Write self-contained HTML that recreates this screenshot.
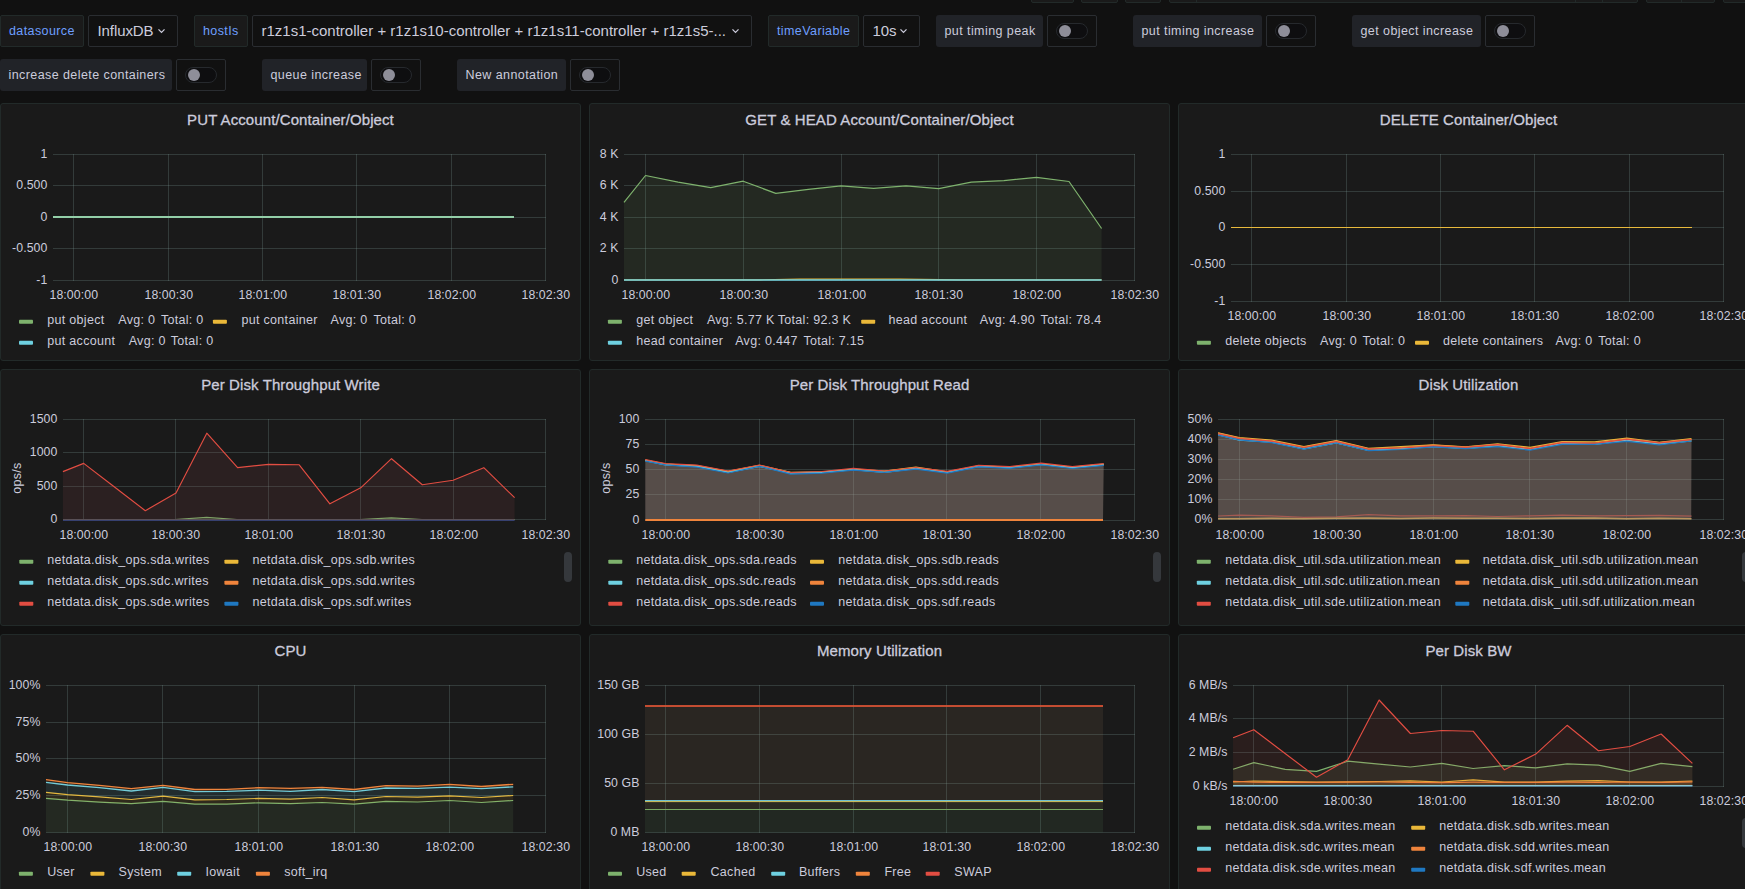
<!DOCTYPE html>
<html><head><meta charset="utf-8"><title>Dashboard</title><style>
html,body{margin:0;padding:0}
body{background:#111111;width:1745px;height:889px;overflow:hidden;position:relative;font-family:"Liberation Sans",sans-serif;color:#ccccdc}
.b{position:absolute;box-sizing:border-box}
.t{position:absolute;white-space:nowrap;line-height:1}
svg{position:absolute;left:0;top:0}
</style></head><body>
<div class="b" style="left:1031px;top:-30px;width:43px;height:33px;background:#1a1a1a;border:1px solid #222a29;border-radius:2px;"></div>
<div class="b" style="left:1081px;top:-30px;width:37px;height:33px;background:#1a1a1a;border:1px solid #222a29;border-radius:2px;"></div>
<div class="b" style="left:1125px;top:-30px;width:36px;height:33px;background:#1a1a1a;border:1px solid #222a29;border-radius:2px;"></div>
<div class="b" style="left:1169px;top:-30px;width:469px;height:33px;background:#1a1a1a;border:1px solid #222a29;border-radius:2px;"></div>
<div class="b" style="left:1646px;top:-30px;width:69px;height:33px;background:#1a1a1a;border:1px solid #222a29;border-radius:2px;"></div>
<div class="b" style="left:1723px;top:-30px;width:68px;height:33px;background:#1a1a1a;border:1px solid #222a29;border-radius:2px;"></div>
<div class="b" style="left:1196px;top:-30px;width:1px;height:33px;background:#222a29;"></div>
<div class="b" style="left:1575px;top:-30px;width:1px;height:33px;background:#222a29;"></div>
<div class="b" style="left:1602px;top:-30px;width:1px;height:33px;background:#222a29;"></div>
<div class="b" style="left:1681px;top:-30px;width:1px;height:33px;background:#222a29;"></div>
<div class="b" style="left:0px;top:15px;width:84px;height:32px;background:#1a1a1a;border:1px solid #222a29;border-radius:2px;"></div>
<div class="b" style="left:88px;top:15px;width:90px;height:32px;background:#111111;border:1px solid #2a2d31;border-radius:2px;"></div>
<div class="b" style="left:194px;top:15px;width:54px;height:32px;background:#1a1a1a;border:1px solid #222a29;border-radius:2px;"></div>
<div class="b" style="left:252px;top:15px;width:500px;height:32px;background:#111111;border:1px solid #2a2d31;border-radius:2px;"></div>
<div class="b" style="left:768px;top:15px;width:91px;height:32px;background:#1a1a1a;border:1px solid #222a29;border-radius:2px;"></div>
<div class="b" style="left:863px;top:15px;width:57px;height:32px;background:#111111;border:1px solid #2a2d31;border-radius:2px;"></div>
<div class="b" style="left:936px;top:15px;width:107px;height:32px;background:#212328;border-radius:3px;"></div>
<div class="b" style="left:1047px;top:15px;width:50px;height:32px;background:#111111;border:1px solid #2a2d31;border-radius:2px;"></div>
<div class="b" style="left:1056px;top:23px;width:32px;height:16px;background:#0e0e10;border:1px solid #26292d;border-radius:8px;"></div>
<div class="b" style="left:1059px;top:25px;width:12px;height:12px;border-radius:6px;background:#8e8e99"></div>
<div class="b" style="left:1133px;top:15px;width:129px;height:32px;background:#212328;border-radius:3px;"></div>
<div class="b" style="left:1266px;top:15px;width:50px;height:32px;background:#111111;border:1px solid #2a2d31;border-radius:2px;"></div>
<div class="b" style="left:1275px;top:23px;width:32px;height:16px;background:#0e0e10;border:1px solid #26292d;border-radius:8px;"></div>
<div class="b" style="left:1278px;top:25px;width:12px;height:12px;border-radius:6px;background:#8e8e99"></div>
<div class="b" style="left:1352px;top:15px;width:129px;height:32px;background:#212328;border-radius:3px;"></div>
<div class="b" style="left:1485px;top:15px;width:50px;height:32px;background:#111111;border:1px solid #2a2d31;border-radius:2px;"></div>
<div class="b" style="left:1494px;top:23px;width:32px;height:16px;background:#0e0e10;border:1px solid #26292d;border-radius:8px;"></div>
<div class="b" style="left:1497px;top:25px;width:12px;height:12px;border-radius:6px;background:#8e8e99"></div>
<div class="b" style="left:0px;top:59px;width:172px;height:32px;background:#212328;border-radius:3px;"></div>
<div class="b" style="left:176px;top:59px;width:50px;height:32px;background:#111111;border:1px solid #2a2d31;border-radius:2px;"></div>
<div class="b" style="left:185px;top:67px;width:32px;height:16px;background:#0e0e10;border:1px solid #26292d;border-radius:8px;"></div>
<div class="b" style="left:188px;top:69px;width:12px;height:12px;border-radius:6px;background:#8e8e99"></div>
<div class="b" style="left:262px;top:59px;width:105px;height:32px;background:#212328;border-radius:3px;"></div>
<div class="b" style="left:371px;top:59px;width:50px;height:32px;background:#111111;border:1px solid #2a2d31;border-radius:2px;"></div>
<div class="b" style="left:380px;top:67px;width:32px;height:16px;background:#0e0e10;border:1px solid #26292d;border-radius:8px;"></div>
<div class="b" style="left:383px;top:69px;width:12px;height:12px;border-radius:6px;background:#8e8e99"></div>
<div class="b" style="left:457px;top:59px;width:109px;height:32px;background:#212328;border-radius:3px;"></div>
<div class="b" style="left:570px;top:59px;width:50px;height:32px;background:#111111;border:1px solid #2a2d31;border-radius:2px;"></div>
<div class="b" style="left:579px;top:67px;width:32px;height:16px;background:#0e0e10;border:1px solid #26292d;border-radius:8px;"></div>
<div class="b" style="left:582px;top:69px;width:12px;height:12px;border-radius:6px;background:#8e8e99"></div>
<div class="b" style="left:0px;top:103px;width:581px;height:258px;background:#1a1a1a;border:1px solid #222a29;border-radius:3px;"></div>
<div class="b" style="left:589px;top:103px;width:581px;height:258px;background:#1a1a1a;border:1px solid #222a29;border-radius:3px;"></div>
<div class="b" style="left:1178px;top:103px;width:581px;height:258px;background:#1a1a1a;border:1px solid #222a29;border-radius:3px;"></div>
<div class="b" style="left:0px;top:369px;width:581px;height:257px;background:#1a1a1a;border:1px solid #222a29;border-radius:3px;"></div>
<div class="b" style="left:589px;top:369px;width:581px;height:257px;background:#1a1a1a;border:1px solid #222a29;border-radius:3px;"></div>
<div class="b" style="left:1178px;top:369px;width:581px;height:257px;background:#1a1a1a;border:1px solid #222a29;border-radius:3px;"></div>
<div class="b" style="left:0px;top:634px;width:581px;height:258px;background:#1a1a1a;border:1px solid #222a29;border-radius:3px;"></div>
<div class="b" style="left:589px;top:634px;width:581px;height:258px;background:#1a1a1a;border:1px solid #222a29;border-radius:3px;"></div>
<div class="b" style="left:1178px;top:634px;width:581px;height:258px;background:#1a1a1a;border:1px solid #222a29;border-radius:3px;"></div>
<div class="b" style="left:564px;top:552px;width:8px;height:30px;background:#35383c;border-radius:4px;"></div>
<div class="b" style="left:1153px;top:552px;width:8px;height:30px;background:#35383c;border-radius:4px;"></div>
<div class="b" style="left:1742px;top:552px;width:8px;height:30px;background:#35383c;border-radius:4px;"></div>
<div class="b" style="left:1742px;top:818px;width:8px;height:30px;background:#35383c;border-radius:4px;"></div>
<svg width="1745" height="889" viewBox="0 0 1745 889">
<path d="M158.5 29.4 L161.5 32.4 L164.5 29.4" stroke="#ccccdc" stroke-width="1.25" fill="none"/>
<path d="M732.5 29.4 L735.5 32.4 L738.5 29.4" stroke="#ccccdc" stroke-width="1.25" fill="none"/>
<path d="M900.5 29.4 L903.5 32.4 L906.5 29.4" stroke="#ccccdc" stroke-width="1.25" fill="none"/>
<path d="M53 154.5H546 M53 185.5H546 M53 217.5H546 M53 248.5H546 M53 280.5H546 M73.5 154.0V281.0 M168.5 154.0V281.0 M262.5 154.0V281.0 M356.5 154.0V281.0 M451.5 154.0V281.0 M545.5 154.0V281.0" stroke="rgba(135,170,165,0.23)" stroke-width="1" fill="none"/>
<polyline points="53.0,217.0 514.0,217.0" stroke="#93cfa8" stroke-width="2.0" fill="none" stroke-linejoin="round"/>
<rect x="19.0" y="319.7" width="14" height="4" rx="0.9" fill="#7EB26D"/>
<rect x="212.9" y="319.7" width="14" height="4" rx="0.9" fill="#EAB839"/>
<rect x="19.0" y="340.7" width="14" height="4" rx="0.9" fill="#6ED0E0"/>
<path d="M624 154.5H1135 M624 185.5H1135 M624 217.5H1135 M624 248.5H1135 M624 280.5H1135 M645.5 154.0V281.0 M743.5 154.0V281.0 M841.5 154.0V281.0 M938.5 154.0V281.0 M1036.5 154.0V281.0 M1134.5 154.0V281.0" stroke="rgba(135,170,165,0.23)" stroke-width="1" fill="none"/>
<polygon points="624.0,280.5 624.0,202.4 645.5,175.5 678.1,182.2 710.7,187.7 743.2,181.2 775.8,193.4 808.4,189.4 841.0,185.8 873.6,188.4 906.1,185.8 938.7,188.6 971.3,182.2 1003.9,180.6 1036.5,177.3 1069.0,181.5 1101.6,228.5 1101.6,280.5" fill="#7EB26D" fill-opacity="0.1"/>
<polyline points="624.0,202.4 645.5,175.5 678.1,182.2 710.7,187.7 743.2,181.2 775.8,193.4 808.4,189.4 841.0,185.8 873.6,188.4 906.1,185.8 938.7,188.6 971.3,182.2 1003.9,180.6 1036.5,177.3 1069.0,181.5 1101.6,228.5" stroke="#7EB26D" stroke-width="1.2" fill="none" stroke-linejoin="round"/>
<polyline points="624.0,279.8 760.0,279.8 800.0,279.2 900.0,279.2 960.0,279.8 1101.6,279.8" stroke="#EAB839" stroke-width="1.2" fill="none" stroke-linejoin="round"/>
<polyline points="624.0,280.0 1101.6,280.0" stroke="#6ED0E0" stroke-width="1.4" fill="none" stroke-linejoin="round"/>
<rect x="607.9" y="319.7" width="14" height="4" rx="0.9" fill="#7EB26D"/>
<rect x="861.2" y="319.7" width="14" height="4" rx="0.9" fill="#EAB839"/>
<rect x="607.9" y="340.7" width="14" height="4" rx="0.9" fill="#6ED0E0"/>
<path d="M1231 154.5H1724 M1231 191.5H1724 M1231 227.5H1724 M1231 264.5H1724 M1231 301.5H1724 M1251.5 154.0V302.0 M1346.5 154.0V302.0 M1440.5 154.0V302.0 M1534.5 154.0V302.0 M1629.5 154.0V302.0 M1723.5 154.0V302.0" stroke="rgba(135,170,165,0.23)" stroke-width="1" fill="none"/>
<polyline points="1231.0,227.5 1692.0,227.5" stroke="#e8b93c" stroke-width="1.1" fill="none" stroke-linejoin="round"/>
<rect x="1196.9" y="340.7" width="14" height="4" rx="0.9" fill="#7EB26D"/>
<rect x="1415.0" y="340.7" width="14" height="4" rx="0.9" fill="#EAB839"/>
<path d="M63 419.5H546 M63 452.5H546 M63 486.5H546 M63 519.5H546 M83.5 419.0V520.0 M175.5 419.0V520.0 M268.5 419.0V520.0 M360.5 419.0V520.0 M453.5 419.0V520.0 M545.5 419.0V520.0" stroke="rgba(135,170,165,0.23)" stroke-width="1" fill="none"/>
<polygon points="63.0,519.5 63.0,519.5 175.0,519.5 206.6,517.3 237.0,519.5 360.0,519.5 391.4,517.8 422.0,519.5 514.6,519.5 514.6,519.5" fill="#7EB26D" fill-opacity="0.1"/>
<polyline points="63.0,519.5 175.0,519.5 206.6,517.3 237.0,519.5 360.0,519.5 391.4,517.8 422.0,519.5 514.6,519.5" stroke="#7EB26D" stroke-width="1.2" fill="none" stroke-linejoin="round"/>
<polygon points="62.9,519.5 62.9,471.6 83.7,463.4 114.5,487.0 145.3,510.7 176.0,493.1 206.8,433.2 237.6,467.6 268.4,464.4 299.2,464.8 329.9,503.8 360.7,487.8 391.5,458.7 422.3,484.8 453.1,480.2 483.8,467.7 514.6,497.7 514.6,519.5" fill="rgb(139,66,73)" fill-opacity="0.15"/>
<polyline points="62.9,471.6 83.7,463.4 114.5,487.0 145.3,510.7 176.0,493.1 206.8,433.2 237.6,467.6 268.4,464.4 299.2,464.8 329.9,503.8 360.7,487.8 391.5,458.7 422.3,484.8 453.1,480.2 483.8,467.7 514.6,497.7" stroke="#E24D42" stroke-width="1.15" fill="none" stroke-linejoin="round"/>
<polyline points="63.0,519.5 514.6,519.5" stroke="#5c5252" stroke-width="1.0" fill="none" stroke-linejoin="round"/>
<polyline points="63.0,520.4 514.6,520.4" stroke="#3d4a86" stroke-width="0.9" fill="none" stroke-linejoin="round"/>
<rect x="19.3" y="559.7" width="14" height="4" rx="0.9" fill="#7EB26D"/>
<rect x="224.4" y="559.7" width="14" height="4" rx="0.9" fill="#EAB839"/>
<rect x="19.3" y="580.7" width="14" height="4" rx="0.9" fill="#6ED0E0"/>
<rect x="224.4" y="580.7" width="14" height="4" rx="0.9" fill="#EF843C"/>
<rect x="19.3" y="601.7" width="14" height="4" rx="0.9" fill="#E24D42"/>
<rect x="224.4" y="601.7" width="14" height="4" rx="0.9" fill="#1F78C1"/>
<path d="M645 419.5H1135 M645 444.5H1135 M645 469.5H1135 M645 494.5H1135 M645 520.5H1135 M665.5 419.0V521.0 M759.5 419.0V521.0 M853.5 419.0V521.0 M946.5 419.0V521.0 M1040.5 419.0V521.0 M1134.5 419.0V521.0" stroke="rgba(135,170,165,0.23)" stroke-width="1" fill="none"/>
<polygon points="645.3,520.5 645.3,461.0 665.5,464.8 696.8,466.5 728.1,472.2 759.4,466.2 790.7,473.6 822.0,472.9 853.3,470.1 884.6,472.2 915.9,468.6 947.2,472.5 978.5,466.8 1009.8,467.9 1041.1,464.8 1072.4,467.9 1103.7,465.0 1103,520.5" fill="rgb(178,154,146)" fill-opacity="0.4"/>
<polyline points="645.3,460.2 665.5,464.2 696.8,465.8 728.1,471.7 759.4,465.7 790.7,472.7 822.0,471.9 853.3,469.8 884.6,471.4 915.9,467.8 947.2,472.3 978.5,466.2 1009.8,467.6 1041.1,464.2 1072.4,467.4 1103.7,464.1" stroke="#7EB26D" stroke-width="1.2" fill="none" stroke-linejoin="round"/>
<polyline points="645.3,460.1 665.5,464.1 696.8,465.5 728.1,471.4 759.4,465.3 790.7,472.3 822.0,472.1 853.3,469.2 884.6,471.0 915.9,467.2 947.2,471.8 978.5,465.8 1009.8,467.1 1041.1,464.1 1072.4,467.1 1103.7,464.3" stroke="#EAB839" stroke-width="1.2" fill="none" stroke-linejoin="round"/>
<polyline points="645.3,460.7 665.5,464.8 696.8,466.3 728.1,472.3 759.4,466.3 790.7,473.1 822.0,472.4 853.3,469.7 884.6,472.4 915.9,468.3 947.2,472.4 978.5,466.4 1009.8,467.7 1041.1,464.5 1072.4,467.6 1103.7,464.9" stroke="#6ED0E0" stroke-width="1.2" fill="none" stroke-linejoin="round"/>
<polyline points="645.3,459.6 665.5,463.6 696.8,465.1 728.1,471.0 759.4,465.0 790.7,472.5 822.0,471.5 853.3,468.3 884.6,471.0 915.9,467.5 947.2,471.3 978.5,465.4 1009.8,466.6 1041.1,463.1 1072.4,466.7 1103.7,463.6" stroke="#E24D42" stroke-width="1.2" fill="none" stroke-linejoin="round"/>
<polyline points="645.3,461.2 665.5,464.9 696.8,467.2 728.1,473.0 759.4,466.3 790.7,474.2 822.0,473.2 853.3,470.2 884.6,472.4 915.9,469.2 947.2,473.2 978.5,466.8 1009.8,468.4 1041.1,464.8 1072.4,468.5 1103.7,465.3" stroke="#1F78C1" stroke-width="1.2" fill="none" stroke-linejoin="round"/>
<polyline points="645.3,520.0 1103.0,520.0" stroke="#EF843C" stroke-width="1.8" fill="none" stroke-linejoin="round"/>
<rect x="608.3" y="559.7" width="14" height="4" rx="0.9" fill="#7EB26D"/>
<rect x="810.0" y="559.7" width="14" height="4" rx="0.9" fill="#EAB839"/>
<rect x="608.3" y="580.7" width="14" height="4" rx="0.9" fill="#6ED0E0"/>
<rect x="810.0" y="580.7" width="14" height="4" rx="0.9" fill="#EF843C"/>
<rect x="608.3" y="601.7" width="14" height="4" rx="0.9" fill="#E24D42"/>
<rect x="810.0" y="601.7" width="14" height="4" rx="0.9" fill="#1F78C1"/>
<path d="M1218 419.5H1724 M1218 439.5H1724 M1218 459.5H1724 M1218 479.5H1724 M1218 499.5H1724 M1218 519.5H1724 M1239.5 419.0V520.0 M1336.5 419.0V520.0 M1433.5 419.0V520.0 M1529.5 419.0V520.0 M1626.5 419.0V520.0 M1723.5 419.0V520.0" stroke="rgba(135,170,165,0.23)" stroke-width="1" fill="none"/>
<polygon points="1218.1,519.5 1218.1,434.4 1239.3,439.5 1271.6,442.1 1303.9,448.6 1336.2,442.5 1368.5,450.2 1400.8,448.6 1433.1,446.6 1465.4,448.4 1497.7,445.7 1530.0,449.3 1562.3,443.4 1594.6,443.9 1626.9,440.3 1659.2,443.9 1691.5,440.6 1691.2,519.5" fill="rgb(178,154,146)" fill-opacity="0.4"/>
<polyline points="1218.1,516.0 1239.3,515.2 1271.6,515.8 1303.9,517.4 1336.2,516.8 1368.5,514.6 1400.8,515.8 1433.1,515.8 1465.4,515.6 1497.7,516.5 1530.0,515.8 1562.3,515.2 1594.6,515.8 1626.9,515.6 1659.2,515.4 1691.5,516.2" stroke="#a45a52" stroke-width="1.2" fill="none" stroke-linejoin="round"/>
<polyline points="1218.1,518.7 1239.3,518.8 1271.6,518.4 1303.9,518.8 1336.2,518.2 1368.5,518.1 1400.8,518.5 1433.1,518.0 1465.4,518.2 1497.7,518.3 1530.0,518.5 1562.3,518.1 1594.6,518.0 1626.9,518.7 1659.2,518.3 1691.5,518.8" stroke="#b8955e" stroke-width="1.6" fill="none" stroke-linejoin="round"/>
<polyline points="1218.1,432.8 1239.3,437.5 1271.6,440.2 1303.9,446.7 1336.2,440.7 1368.5,448.4 1400.8,446.7 1433.1,444.8 1465.4,446.9 1497.7,443.8 1530.0,447.3 1562.3,441.7 1594.6,441.8 1626.9,438.2 1659.2,442.4 1691.5,438.7" stroke="#EAB839" stroke-width="1.2" fill="none" stroke-linejoin="round"/>
<polyline points="1218.1,434.2 1239.3,438.9 1271.6,441.8 1303.9,448.5 1336.2,441.9 1368.5,450.1 1400.8,448.5 1433.1,446.0 1465.4,448.3 1497.7,445.5 1530.0,449.2 1562.3,443.1 1594.6,443.9 1626.9,440.3 1659.2,443.3 1691.5,440.0" stroke="#7EB26D" stroke-width="1.2" fill="none" stroke-linejoin="round"/>
<polyline points="1218.1,434.7 1239.3,440.1 1271.6,442.1 1303.9,448.8 1336.2,442.8 1368.5,450.3 1400.8,448.7 1433.1,446.7 1465.4,448.5 1497.7,446.0 1530.0,449.3 1562.3,443.5 1594.6,444.3 1626.9,440.1 1659.2,444.2 1691.5,441.0" stroke="#6ED0E0" stroke-width="1.2" fill="none" stroke-linejoin="round"/>
<polyline points="1218.1,433.0 1239.3,438.1 1271.6,441.1 1303.9,447.2 1336.2,441.0 1368.5,448.9 1400.8,447.6 1433.1,445.1 1465.4,447.1 1497.7,444.4 1530.0,448.4 1562.3,442.2 1594.6,443.0 1626.9,438.8 1659.2,442.6 1691.5,439.5" stroke="#EF843C" stroke-width="1.2" fill="none" stroke-linejoin="round"/>
<polyline points="1218.1,433.9 1239.3,438.7 1271.6,441.1 1303.9,447.5 1336.2,441.7 1368.5,449.2 1400.8,448.0 1433.1,446.1 1465.4,447.3 1497.7,444.7 1530.0,448.7 1562.3,442.7 1594.6,443.3 1626.9,439.4 1659.2,442.8 1691.5,439.6" stroke="#E24D42" stroke-width="1.2" fill="none" stroke-linejoin="round"/>
<polyline points="1218.1,435.2 1239.3,439.9 1271.6,442.6 1303.9,449.1 1336.2,443.0 1368.5,450.7 1400.8,449.5 1433.1,446.9 1465.4,448.6 1497.7,446.7 1530.0,450.2 1562.3,444.4 1594.6,444.4 1626.9,441.3 1659.2,444.8 1691.5,441.0" stroke="#1F78C1" stroke-width="1.2" fill="none" stroke-linejoin="round"/>
<rect x="1196.8" y="559.7" width="14" height="4" rx="0.9" fill="#7EB26D"/>
<rect x="1455.3" y="559.7" width="14" height="4" rx="0.9" fill="#EAB839"/>
<rect x="1196.8" y="580.7" width="14" height="4" rx="0.9" fill="#6ED0E0"/>
<rect x="1455.3" y="580.7" width="14" height="4" rx="0.9" fill="#EF843C"/>
<rect x="1196.8" y="601.7" width="14" height="4" rx="0.9" fill="#E24D42"/>
<rect x="1455.3" y="601.7" width="14" height="4" rx="0.9" fill="#1F78C1"/>
<path d="M46 685.5H546 M46 722.5H546 M46 758.5H546 M46 795.5H546 M46 832.5H546 M67.5 685.0V833.0 M162.5 685.0V833.0 M258.5 685.0V833.0 M354.5 685.0V833.0 M449.5 685.0V833.0 M545.5 685.0V833.0" stroke="rgba(135,170,165,0.23)" stroke-width="1" fill="none"/>
<polygon points="46.0,798.3 67.6,800.2 99.4,802.2 131.3,803.7 163.1,801.3 194.9,804.2 226.7,804.2 258.6,802.8 290.4,803.7 322.2,802.5 354.1,804.2 385.9,801.4 417.7,802.0 449.6,800.5 481.4,802.5 513.2,800.5 513.2,832.5 481.4,832.5 449.6,832.5 417.7,832.5 385.9,832.5 354.1,832.5 322.2,832.5 290.4,832.5 258.6,832.5 226.7,832.5 194.9,832.5 163.1,832.5 131.3,832.5 99.4,832.5 67.6,832.5 46.0,832.5" fill="#7EB26D" fill-opacity="0.1"/>
<polyline points="46.0,798.3 67.6,800.2 99.4,802.2 131.3,803.7 163.1,801.3 194.9,804.2 226.7,804.2 258.6,802.8 290.4,803.7 322.2,802.5 354.1,804.2 385.9,801.4 417.7,802.0 449.6,800.5 481.4,802.5 513.2,800.5" stroke="#7EB26D" stroke-width="1.2" fill="none" stroke-linejoin="round"/>
<polygon points="46.0,792.3 67.6,794.6 99.4,796.9 131.3,799.5 163.1,796.2 194.9,799.8 226.7,799.5 258.6,798.4 290.4,799.2 322.2,797.5 354.1,799.8 385.9,796.5 417.7,797.2 449.6,795.8 481.4,797.5 513.2,795.5 513.2,800.5 481.4,802.5 449.6,800.5 417.7,802.0 385.9,801.4 354.1,804.2 322.2,802.5 290.4,803.7 258.6,802.8 226.7,804.2 194.9,804.2 163.1,801.3 131.3,803.7 99.4,802.2 67.6,800.2 46.0,798.3" fill="#EAB839" fill-opacity="0.1"/>
<polyline points="46.0,792.3 67.6,794.6 99.4,796.9 131.3,799.5 163.1,796.2 194.9,799.8 226.7,799.5 258.6,798.4 290.4,799.2 322.2,797.5 354.1,799.8 385.9,796.5 417.7,797.2 449.6,795.8 481.4,797.5 513.2,795.5" stroke="#EAB839" stroke-width="1.2" fill="none" stroke-linejoin="round"/>
<polygon points="46.0,782.3 67.6,785.0 99.4,787.6 131.3,791.0 163.1,787.3 194.9,791.6 226.7,791.3 258.6,790.2 290.4,791.3 322.2,789.5 354.1,791.6 385.9,788.0 417.7,788.3 449.6,787.1 481.4,788.6 513.2,786.8 513.2,795.5 481.4,797.5 449.6,795.8 417.7,797.2 385.9,796.5 354.1,799.8 322.2,797.5 290.4,799.2 258.6,798.4 226.7,799.5 194.9,799.8 163.1,796.2 131.3,799.5 99.4,796.9 67.6,794.6 46.0,792.3" fill="#6ED0E0" fill-opacity="0.1"/>
<polyline points="46.0,782.3 67.6,785.0 99.4,787.6 131.3,791.0 163.1,787.3 194.9,791.6 226.7,791.3 258.6,790.2 290.4,791.3 322.2,789.5 354.1,791.6 385.9,788.0 417.7,788.3 449.6,787.1 481.4,788.6 513.2,786.8" stroke="#6ED0E0" stroke-width="1.3" fill="none" stroke-linejoin="round"/>
<polygon points="46.0,779.7 67.6,782.6 99.4,785.3 131.3,788.6 163.1,785.3 194.9,789.5 226.7,789.4 258.6,787.7 290.4,788.3 322.2,787.3 354.1,789.5 385.9,785.6 417.7,786.1 449.6,784.3 481.4,786.5 513.2,784.3 513.2,786.8 481.4,788.6 449.6,787.1 417.7,788.3 385.9,788.0 354.1,791.6 322.2,789.5 290.4,791.3 258.6,790.2 226.7,791.3 194.9,791.6 163.1,787.3 131.3,791.0 99.4,787.6 67.6,785.0 46.0,782.3" fill="#EF843C" fill-opacity="0.1"/>
<polyline points="46.0,779.7 67.6,782.6 99.4,785.3 131.3,788.6 163.1,785.3 194.9,789.5 226.7,789.4 258.6,787.7 290.4,788.3 322.2,787.3 354.1,789.5 385.9,785.6 417.7,786.1 449.6,784.3 481.4,786.5 513.2,784.3" stroke="#EF843C" stroke-width="1.3" fill="none" stroke-linejoin="round"/>
<rect x="18.9" y="871.7" width="14" height="4" rx="0.9" fill="#7EB26D"/>
<rect x="90.4" y="871.7" width="14" height="4" rx="0.9" fill="#EAB839"/>
<rect x="177.2" y="871.7" width="14" height="4" rx="0.9" fill="#6ED0E0"/>
<rect x="255.9" y="871.7" width="14" height="4" rx="0.9" fill="#EF843C"/>
<path d="M645 685.5H1135 M645 734.5H1135 M645 783.5H1135 M645 832.5H1135 M665.5 685.0V833.0 M759.5 685.0V833.0 M853.5 685.0V833.0 M946.5 685.0V833.0 M1040.5 685.0V833.0 M1134.5 685.0V833.0" stroke="rgba(135,170,165,0.23)" stroke-width="1" fill="none"/>
<rect x="645" y="809.5" width="458" height="23" fill="rgb(106,166,106)" fill-opacity="0.1"/>
<rect x="645" y="801.5" width="458" height="8" fill="rgb(196,186,106)" fill-opacity="0.1"/>
<rect x="645" y="706" width="458" height="95" fill="rgb(186,146,106)" fill-opacity="0.1"/>
<polyline points="645.0,809.5 1103.0,809.5" stroke="#78a862" stroke-width="1.1" fill="none" stroke-linejoin="round"/>
<polyline points="645.0,801.6 1103.0,801.6" stroke="#d8c860" stroke-width="1.0" fill="none" stroke-linejoin="round"/>
<polyline points="645.0,800.5 1103.0,800.5" stroke="#6ec0d0" stroke-width="1.0" fill="none" stroke-linejoin="round"/>
<polyline points="645.0,706.0 1103.0,706.0" stroke="#e0602f" stroke-width="1.5" fill="none" stroke-linejoin="round"/>
<polyline points="645.0,706.0 1103.0,706.0" stroke="#d84a3a" stroke-width="1.0" fill="none" stroke-linejoin="round"/>
<rect x="608.0" y="871.7" width="14" height="4" rx="0.9" fill="#7EB26D"/>
<rect x="681.7" y="871.7" width="14" height="4" rx="0.9" fill="#EAB839"/>
<rect x="771.2" y="871.7" width="14" height="4" rx="0.9" fill="#6ED0E0"/>
<rect x="855.8" y="871.7" width="14" height="4" rx="0.9" fill="#EF843C"/>
<rect x="925.7" y="871.7" width="14" height="4" rx="0.9" fill="#E24D42"/>
<path d="M1233 685.5H1724 M1233 718.5H1724 M1233 752.5H1724 M1233 786.5H1724 M1253.5 685.0V787.0 M1347.5 685.0V787.0 M1441.5 685.0V787.0 M1535.5 685.0V787.0 M1629.5 685.0V787.0 M1723.5 685.0V787.0" stroke="rgba(135,170,165,0.23)" stroke-width="1" fill="none"/>
<polygon points="1233.1,786.5 1233.1,769.3 1253.8,762.6 1285.1,769.3 1316.5,771.4 1347.8,761.2 1379.1,764.1 1410.4,767.0 1441.8,763.3 1473.1,768.5 1504.4,765.7 1535.8,767.9 1567.1,763.8 1598.4,765.1 1629.8,771.3 1661.1,763.3 1692.4,766.6 1692.4,786.5" fill="#7EB26D" fill-opacity="0.1"/>
<polyline points="1233.1,769.3 1253.8,762.6 1285.1,769.3 1316.5,771.4 1347.8,761.2 1379.1,764.1 1410.4,767.0 1441.8,763.3 1473.1,768.5 1504.4,765.7 1535.8,767.9 1567.1,763.8 1598.4,765.1 1629.8,771.3 1661.1,763.3 1692.4,766.6" stroke="#7EB26D" stroke-width="1.2" fill="none" stroke-linejoin="round"/>
<polygon points="1233.1,786.5 1233.1,782.0 1253.8,781.0 1285.1,781.6 1316.5,782.2 1347.8,781.8 1379.1,781.5 1410.4,780.8 1441.8,782.0 1473.1,779.8 1504.4,782.2 1535.8,782.0 1567.1,781.2 1598.4,780.6 1629.8,782.0 1661.1,782.2 1692.4,781.0 1692.4,786.5" fill="#EAB839" fill-opacity="0.1"/>
<polyline points="1233.1,782.0 1253.8,781.0 1285.1,781.6 1316.5,782.2 1347.8,781.8 1379.1,781.5 1410.4,780.8 1441.8,782.0 1473.1,779.8 1504.4,782.2 1535.8,782.0 1567.1,781.2 1598.4,780.6 1629.8,782.0 1661.1,782.2 1692.4,781.0" stroke="#EAB839" stroke-width="1.2" fill="none" stroke-linejoin="round"/>
<polygon points="1233.1,786.5 1233.1,785.9 1253.8,785.9 1285.1,785.9 1316.5,785.9 1347.8,785.9 1379.1,785.9 1410.4,785.9 1441.8,785.9 1473.1,785.9 1504.4,785.9 1535.8,785.9 1567.1,785.9 1598.4,785.9 1629.8,785.9 1661.1,785.9 1692.4,785.9 1692.4,786.5" fill="#1F78C1" fill-opacity="0.1"/>
<polyline points="1233.1,785.9 1253.8,785.9 1285.1,785.9 1316.5,785.9 1347.8,785.9 1379.1,785.9 1410.4,785.9 1441.8,785.9 1473.1,785.9 1504.4,785.9 1535.8,785.9 1567.1,785.9 1598.4,785.9 1629.8,785.9 1661.1,785.9 1692.4,785.9" stroke="#1F78C1" stroke-width="1.2" fill="none" stroke-linejoin="round"/>
<polygon points="1233.1,786.5 1233.1,781.4 1253.8,782.2 1285.1,782.4 1316.5,782.4 1347.8,782.2 1379.1,782.0 1410.4,782.4 1441.8,782.6 1473.1,782.2 1504.4,782.4 1535.8,782.4 1567.1,782.2 1598.4,782.4 1629.8,782.0 1661.1,782.4 1692.4,781.8 1692.4,786.5" fill="#EF843C" fill-opacity="0.1"/>
<polyline points="1233.1,781.4 1253.8,782.2 1285.1,782.4 1316.5,782.4 1347.8,782.2 1379.1,782.0 1410.4,782.4 1441.8,782.6 1473.1,782.2 1504.4,782.4 1535.8,782.4 1567.1,782.2 1598.4,782.4 1629.8,782.0 1661.1,782.4 1692.4,781.8" stroke="#EF843C" stroke-width="1.2" fill="none" stroke-linejoin="round"/>
<polygon points="1233.1,786.5 1233.1,737.8 1253.8,729.7 1285.1,753.5 1316.5,777.2 1347.8,759.7 1379.1,700.0 1410.4,733.5 1441.8,730.5 1473.1,731.2 1504.4,769.8 1535.8,754.1 1567.1,725.3 1598.4,750.8 1629.8,746.5 1661.1,734.0 1692.4,763.4 1692.4,786.5" fill="#E24D42" fill-opacity="0.085"/>
<polyline points="1233.1,737.8 1253.8,729.7 1285.1,753.5 1316.5,777.2 1347.8,759.7 1379.1,700.0 1410.4,733.5 1441.8,730.5 1473.1,731.2 1504.4,769.8 1535.8,754.1 1567.1,725.3 1598.4,750.8 1629.8,746.5 1661.1,734.0 1692.4,763.4" stroke="#E24D42" stroke-width="1.15" fill="none" stroke-linejoin="round"/>
<polyline points="1233.1,785.6 1253.8,785.6 1285.1,785.6 1316.5,785.6 1347.8,785.6 1379.1,785.6 1410.4,785.6 1441.8,785.6 1473.1,785.6 1504.4,785.6 1535.8,785.6 1567.1,785.6 1598.4,785.6 1629.8,785.6 1661.1,785.6 1692.4,785.6" stroke="#8fc9d2" stroke-width="1.4" fill="none" stroke-linejoin="round"/>
<rect x="1197.0" y="825.7" width="14" height="4" rx="0.9" fill="#7EB26D"/>
<rect x="1411.2" y="825.7" width="14" height="4" rx="0.9" fill="#EAB839"/>
<rect x="1197.0" y="846.7" width="14" height="4" rx="0.9" fill="#6ED0E0"/>
<rect x="1411.2" y="846.7" width="14" height="4" rx="0.9" fill="#EF843C"/>
<rect x="1197.0" y="867.7" width="14" height="4" rx="0.9" fill="#E24D42"/>
<rect x="1411.2" y="867.7" width="14" height="4" rx="0.9" fill="#1F78C1"/>
</svg>
<div class="t" style="top:25.12px;font-size:12.5px;letter-spacing:0.4px;color:#6e9fff;left:9.00px;">datasource</div>
<div class="t" style="top:23.30px;font-size:15px;letter-spacing:-0.08px;left:97.50px;">InfluxDB</div>
<div class="t" style="top:25.12px;font-size:12.5px;letter-spacing:0.4px;color:#6e9fff;left:203.00px;">hostIs</div>
<div class="t" style="top:23.30px;font-size:15px;letter-spacing:0.0px;left:261.50px;">r1z1s1-controller + r1z1s10-controller + r1z1s11-controller + r1z1s5-...</div>
<div class="t" style="top:25.12px;font-size:12.5px;letter-spacing:0.4px;color:#6e9fff;left:777.00px;">timeVariable</div>
<div class="t" style="top:23.30px;font-size:15px;letter-spacing:-0.08px;left:872.50px;">10s</div>
<div class="t" style="top:25.12px;font-size:12.5px;letter-spacing:0.42px;left:944.50px;">put timing peak</div>
<div class="t" style="top:25.12px;font-size:12.5px;letter-spacing:0.42px;left:1141.50px;">put timing increase</div>
<div class="t" style="top:25.12px;font-size:12.5px;letter-spacing:0.42px;left:1360.50px;">get object increase</div>
<div class="t" style="top:69.12px;font-size:12.5px;letter-spacing:0.42px;left:8.50px;">increase delete containers</div>
<div class="t" style="top:69.12px;font-size:12.5px;letter-spacing:0.42px;left:270.50px;">queue increase</div>
<div class="t" style="top:69.12px;font-size:12.5px;letter-spacing:0.42px;left:465.50px;">New annotation</div>
<div class="t" style="top:112.30px;font-size:15px;letter-spacing:0.1px;left:-109.50px;width:800px;text-align:center;-webkit-text-stroke:0.3px #ccccdc;">PUT Account/Container/Object</div>
<div class="t" style="top:112.30px;font-size:15px;letter-spacing:0.1px;left:479.50px;width:800px;text-align:center;-webkit-text-stroke:0.3px #ccccdc;">GET &amp; HEAD Account/Container/Object</div>
<div class="t" style="top:112.30px;font-size:15px;letter-spacing:0.1px;left:1068.50px;width:800px;text-align:center;-webkit-text-stroke:0.3px #ccccdc;">DELETE Container/Object</div>
<div class="t" style="top:377.30px;font-size:15px;letter-spacing:0.1px;left:-109.50px;width:800px;text-align:center;-webkit-text-stroke:0.3px #ccccdc;">Per Disk Throughput Write</div>
<div class="t" style="top:377.30px;font-size:15px;letter-spacing:0.1px;left:479.50px;width:800px;text-align:center;-webkit-text-stroke:0.3px #ccccdc;">Per Disk Throughput Read</div>
<div class="t" style="top:377.30px;font-size:15px;letter-spacing:0.1px;left:1068.50px;width:800px;text-align:center;-webkit-text-stroke:0.3px #ccccdc;">Disk Utilization</div>
<div class="t" style="top:643.30px;font-size:15px;letter-spacing:0.1px;left:-109.50px;width:800px;text-align:center;-webkit-text-stroke:0.3px #ccccdc;">CPU</div>
<div class="t" style="top:643.30px;font-size:15px;letter-spacing:0.1px;left:479.50px;width:800px;text-align:center;-webkit-text-stroke:0.3px #ccccdc;">Memory Utilization</div>
<div class="t" style="top:643.30px;font-size:15px;letter-spacing:0.1px;left:1068.50px;width:800px;text-align:center;-webkit-text-stroke:0.3px #ccccdc;">Per Disk BW</div>
<div class="t" style="top:148.49px;font-size:12.3px;letter-spacing:0.1px;left:-552.50px;width:600px;text-align:right;">1</div>
<div class="t" style="top:179.49px;font-size:12.3px;letter-spacing:0.1px;left:-552.50px;width:600px;text-align:right;">0.500</div>
<div class="t" style="top:211.49px;font-size:12.3px;letter-spacing:0.1px;left:-552.50px;width:600px;text-align:right;">0</div>
<div class="t" style="top:242.49px;font-size:12.3px;letter-spacing:0.1px;left:-552.50px;width:600px;text-align:right;">-0.500</div>
<div class="t" style="top:274.49px;font-size:12.3px;letter-spacing:0.1px;left:-552.50px;width:600px;text-align:right;">-1</div>
<div class="t" style="top:288.59px;font-size:12.3px;letter-spacing:0.1px;left:-326.20px;width:800px;text-align:center;">18:00:00</div>
<div class="t" style="top:288.59px;font-size:12.3px;letter-spacing:0.1px;left:-231.20px;width:800px;text-align:center;">18:00:30</div>
<div class="t" style="top:288.59px;font-size:12.3px;letter-spacing:0.1px;left:-137.20px;width:800px;text-align:center;">18:01:00</div>
<div class="t" style="top:288.59px;font-size:12.3px;letter-spacing:0.1px;left:-43.20px;width:800px;text-align:center;">18:01:30</div>
<div class="t" style="top:288.59px;font-size:12.3px;letter-spacing:0.1px;left:51.80px;width:800px;text-align:center;">18:02:00</div>
<div class="t" style="top:288.59px;font-size:12.3px;letter-spacing:0.1px;left:145.80px;width:800px;text-align:center;">18:02:30</div>
<div class="t" style="top:314.42px;font-size:12.5px;letter-spacing:0.3px;left:47.30px;">put object</div>
<div class="t" style="top:314.42px;font-size:12.5px;letter-spacing:0.3px;left:118.30px;">Avg: 0</div>
<div class="t" style="top:314.42px;font-size:12.5px;letter-spacing:0.3px;left:160.90px;">Total: 0</div>
<div class="t" style="top:314.42px;font-size:12.5px;letter-spacing:0.3px;left:241.50px;">put container</div>
<div class="t" style="top:314.42px;font-size:12.5px;letter-spacing:0.3px;left:330.60px;">Avg: 0</div>
<div class="t" style="top:314.42px;font-size:12.5px;letter-spacing:0.3px;left:373.40px;">Total: 0</div>
<div class="t" style="top:335.42px;font-size:12.5px;letter-spacing:0.3px;left:47.30px;">put account</div>
<div class="t" style="top:335.42px;font-size:12.5px;letter-spacing:0.3px;left:128.70px;">Avg: 0</div>
<div class="t" style="top:335.42px;font-size:12.5px;letter-spacing:0.3px;left:170.80px;">Total: 0</div>
<div class="t" style="top:148.49px;font-size:12.3px;letter-spacing:0.1px;left:18.50px;width:600px;text-align:right;">8 K</div>
<div class="t" style="top:179.49px;font-size:12.3px;letter-spacing:0.1px;left:18.50px;width:600px;text-align:right;">6 K</div>
<div class="t" style="top:211.49px;font-size:12.3px;letter-spacing:0.1px;left:18.50px;width:600px;text-align:right;">4 K</div>
<div class="t" style="top:242.49px;font-size:12.3px;letter-spacing:0.1px;left:18.50px;width:600px;text-align:right;">2 K</div>
<div class="t" style="top:274.49px;font-size:12.3px;letter-spacing:0.1px;left:18.50px;width:600px;text-align:right;">0</div>
<div class="t" style="top:288.59px;font-size:12.3px;letter-spacing:0.1px;left:245.80px;width:800px;text-align:center;">18:00:00</div>
<div class="t" style="top:288.59px;font-size:12.3px;letter-spacing:0.1px;left:343.80px;width:800px;text-align:center;">18:00:30</div>
<div class="t" style="top:288.59px;font-size:12.3px;letter-spacing:0.1px;left:441.80px;width:800px;text-align:center;">18:01:00</div>
<div class="t" style="top:288.59px;font-size:12.3px;letter-spacing:0.1px;left:538.80px;width:800px;text-align:center;">18:01:30</div>
<div class="t" style="top:288.59px;font-size:12.3px;letter-spacing:0.1px;left:636.80px;width:800px;text-align:center;">18:02:00</div>
<div class="t" style="top:288.59px;font-size:12.3px;letter-spacing:0.1px;left:734.80px;width:800px;text-align:center;">18:02:30</div>
<div class="t" style="top:314.42px;font-size:12.5px;letter-spacing:0.3px;left:636.20px;">get object</div>
<div class="t" style="top:314.42px;font-size:12.5px;letter-spacing:0.3px;left:706.90px;">Avg: 5.77 K</div>
<div class="t" style="top:314.42px;font-size:12.5px;letter-spacing:0.3px;left:777.80px;">Total: 92.3 K</div>
<div class="t" style="top:314.42px;font-size:12.5px;letter-spacing:0.3px;left:888.60px;">head account</div>
<div class="t" style="top:314.42px;font-size:12.5px;letter-spacing:0.3px;left:979.80px;">Avg: 4.90</div>
<div class="t" style="top:314.42px;font-size:12.5px;letter-spacing:0.3px;left:1040.60px;">Total: 78.4</div>
<div class="t" style="top:335.42px;font-size:12.5px;letter-spacing:0.3px;left:636.20px;">head container</div>
<div class="t" style="top:335.42px;font-size:12.5px;letter-spacing:0.3px;left:735.20px;">Avg: 0.447</div>
<div class="t" style="top:335.42px;font-size:12.5px;letter-spacing:0.3px;left:803.40px;">Total: 7.15</div>
<div class="t" style="top:148.49px;font-size:12.3px;letter-spacing:0.1px;left:625.50px;width:600px;text-align:right;">1</div>
<div class="t" style="top:185.49px;font-size:12.3px;letter-spacing:0.1px;left:625.50px;width:600px;text-align:right;">0.500</div>
<div class="t" style="top:221.49px;font-size:12.3px;letter-spacing:0.1px;left:625.50px;width:600px;text-align:right;">0</div>
<div class="t" style="top:258.49px;font-size:12.3px;letter-spacing:0.1px;left:625.50px;width:600px;text-align:right;">-0.500</div>
<div class="t" style="top:295.49px;font-size:12.3px;letter-spacing:0.1px;left:625.50px;width:600px;text-align:right;">-1</div>
<div class="t" style="top:309.59px;font-size:12.3px;letter-spacing:0.1px;left:851.80px;width:800px;text-align:center;">18:00:00</div>
<div class="t" style="top:309.59px;font-size:12.3px;letter-spacing:0.1px;left:946.80px;width:800px;text-align:center;">18:00:30</div>
<div class="t" style="top:309.59px;font-size:12.3px;letter-spacing:0.1px;left:1040.80px;width:800px;text-align:center;">18:01:00</div>
<div class="t" style="top:309.59px;font-size:12.3px;letter-spacing:0.1px;left:1134.80px;width:800px;text-align:center;">18:01:30</div>
<div class="t" style="top:309.59px;font-size:12.3px;letter-spacing:0.1px;left:1229.80px;width:800px;text-align:center;">18:02:00</div>
<div class="t" style="top:309.59px;font-size:12.3px;letter-spacing:0.1px;left:1323.80px;width:800px;text-align:center;">18:02:30</div>
<div class="t" style="top:335.42px;font-size:12.5px;letter-spacing:0.3px;left:1225.20px;">delete objects</div>
<div class="t" style="top:335.42px;font-size:12.5px;letter-spacing:0.3px;left:1320.00px;">Avg: 0</div>
<div class="t" style="top:335.42px;font-size:12.5px;letter-spacing:0.3px;left:1362.50px;">Total: 0</div>
<div class="t" style="top:335.42px;font-size:12.5px;letter-spacing:0.3px;left:1443.00px;">delete containers</div>
<div class="t" style="top:335.42px;font-size:12.5px;letter-spacing:0.3px;left:1555.60px;">Avg: 0</div>
<div class="t" style="top:335.42px;font-size:12.5px;letter-spacing:0.3px;left:1598.20px;">Total: 0</div>
<div class="t" style="top:413.49px;font-size:12.3px;letter-spacing:0.1px;left:-542.50px;width:600px;text-align:right;">1500</div>
<div class="t" style="top:446.49px;font-size:12.3px;letter-spacing:0.1px;left:-542.50px;width:600px;text-align:right;">1000</div>
<div class="t" style="top:480.49px;font-size:12.3px;letter-spacing:0.1px;left:-542.50px;width:600px;text-align:right;">500</div>
<div class="t" style="top:513.49px;font-size:12.3px;letter-spacing:0.1px;left:-542.50px;width:600px;text-align:right;">0</div>
<div class="t" style="top:528.89px;font-size:12.3px;letter-spacing:0.1px;left:-316.20px;width:800px;text-align:center;">18:00:00</div>
<div class="t" style="top:528.89px;font-size:12.3px;letter-spacing:0.1px;left:-224.20px;width:800px;text-align:center;">18:00:30</div>
<div class="t" style="top:528.89px;font-size:12.3px;letter-spacing:0.1px;left:-131.20px;width:800px;text-align:center;">18:01:00</div>
<div class="t" style="top:528.89px;font-size:12.3px;letter-spacing:0.1px;left:-39.20px;width:800px;text-align:center;">18:01:30</div>
<div class="t" style="top:528.89px;font-size:12.3px;letter-spacing:0.1px;left:53.80px;width:800px;text-align:center;">18:02:00</div>
<div class="t" style="top:528.89px;font-size:12.3px;letter-spacing:0.1px;left:145.80px;width:800px;text-align:center;">18:02:30</div>
<div class="t" style="top:554.42px;font-size:12.5px;letter-spacing:0.3px;left:47.20px;">netdata.disk_ops.sda.writes</div>
<div class="t" style="top:554.42px;font-size:12.5px;letter-spacing:0.3px;left:252.60px;">netdata.disk_ops.sdb.writes</div>
<div class="t" style="top:575.42px;font-size:12.5px;letter-spacing:0.3px;left:47.20px;">netdata.disk_ops.sdc.writes</div>
<div class="t" style="top:575.42px;font-size:12.5px;letter-spacing:0.3px;left:252.60px;">netdata.disk_ops.sdd.writes</div>
<div class="t" style="top:596.42px;font-size:12.5px;letter-spacing:0.3px;left:47.20px;">netdata.disk_ops.sde.writes</div>
<div class="t" style="top:596.42px;font-size:12.5px;letter-spacing:0.3px;left:252.60px;">netdata.disk_ops.sdf.writes</div>
<div class="t" style="top:413.49px;font-size:12.3px;letter-spacing:0.1px;left:39.50px;width:600px;text-align:right;">100</div>
<div class="t" style="top:438.49px;font-size:12.3px;letter-spacing:0.1px;left:39.50px;width:600px;text-align:right;">75</div>
<div class="t" style="top:463.49px;font-size:12.3px;letter-spacing:0.1px;left:39.50px;width:600px;text-align:right;">50</div>
<div class="t" style="top:488.49px;font-size:12.3px;letter-spacing:0.1px;left:39.50px;width:600px;text-align:right;">25</div>
<div class="t" style="top:514.49px;font-size:12.3px;letter-spacing:0.1px;left:39.50px;width:600px;text-align:right;">0</div>
<div class="t" style="top:528.89px;font-size:12.3px;letter-spacing:0.1px;left:265.80px;width:800px;text-align:center;">18:00:00</div>
<div class="t" style="top:528.89px;font-size:12.3px;letter-spacing:0.1px;left:359.80px;width:800px;text-align:center;">18:00:30</div>
<div class="t" style="top:528.89px;font-size:12.3px;letter-spacing:0.1px;left:453.80px;width:800px;text-align:center;">18:01:00</div>
<div class="t" style="top:528.89px;font-size:12.3px;letter-spacing:0.1px;left:546.80px;width:800px;text-align:center;">18:01:30</div>
<div class="t" style="top:528.89px;font-size:12.3px;letter-spacing:0.1px;left:640.80px;width:800px;text-align:center;">18:02:00</div>
<div class="t" style="top:528.89px;font-size:12.3px;letter-spacing:0.1px;left:734.80px;width:800px;text-align:center;">18:02:30</div>
<div class="t" style="top:554.42px;font-size:12.5px;letter-spacing:0.3px;left:636.20px;">netdata.disk_ops.sda.reads</div>
<div class="t" style="top:554.42px;font-size:12.5px;letter-spacing:0.3px;left:838.30px;">netdata.disk_ops.sdb.reads</div>
<div class="t" style="top:575.42px;font-size:12.5px;letter-spacing:0.3px;left:636.20px;">netdata.disk_ops.sdc.reads</div>
<div class="t" style="top:575.42px;font-size:12.5px;letter-spacing:0.3px;left:838.30px;">netdata.disk_ops.sdd.reads</div>
<div class="t" style="top:596.42px;font-size:12.5px;letter-spacing:0.3px;left:636.20px;">netdata.disk_ops.sde.reads</div>
<div class="t" style="top:596.42px;font-size:12.5px;letter-spacing:0.3px;left:838.30px;">netdata.disk_ops.sdf.reads</div>
<div class="t" style="top:413.49px;font-size:12.3px;letter-spacing:0.1px;left:612.50px;width:600px;text-align:right;">50%</div>
<div class="t" style="top:433.49px;font-size:12.3px;letter-spacing:0.1px;left:612.50px;width:600px;text-align:right;">40%</div>
<div class="t" style="top:453.49px;font-size:12.3px;letter-spacing:0.1px;left:612.50px;width:600px;text-align:right;">30%</div>
<div class="t" style="top:473.49px;font-size:12.3px;letter-spacing:0.1px;left:612.50px;width:600px;text-align:right;">20%</div>
<div class="t" style="top:493.49px;font-size:12.3px;letter-spacing:0.1px;left:612.50px;width:600px;text-align:right;">10%</div>
<div class="t" style="top:513.49px;font-size:12.3px;letter-spacing:0.1px;left:612.50px;width:600px;text-align:right;">0%</div>
<div class="t" style="top:528.89px;font-size:12.3px;letter-spacing:0.1px;left:839.80px;width:800px;text-align:center;">18:00:00</div>
<div class="t" style="top:528.89px;font-size:12.3px;letter-spacing:0.1px;left:936.80px;width:800px;text-align:center;">18:00:30</div>
<div class="t" style="top:528.89px;font-size:12.3px;letter-spacing:0.1px;left:1033.80px;width:800px;text-align:center;">18:01:00</div>
<div class="t" style="top:528.89px;font-size:12.3px;letter-spacing:0.1px;left:1129.80px;width:800px;text-align:center;">18:01:30</div>
<div class="t" style="top:528.89px;font-size:12.3px;letter-spacing:0.1px;left:1226.80px;width:800px;text-align:center;">18:02:00</div>
<div class="t" style="top:528.89px;font-size:12.3px;letter-spacing:0.1px;left:1323.80px;width:800px;text-align:center;">18:02:30</div>
<div class="t" style="top:554.42px;font-size:12.5px;letter-spacing:0.3px;left:1225.30px;">netdata.disk_util.sda.utilization.mean</div>
<div class="t" style="top:554.42px;font-size:12.5px;letter-spacing:0.3px;left:1482.80px;">netdata.disk_util.sdb.utilization.mean</div>
<div class="t" style="top:575.42px;font-size:12.5px;letter-spacing:0.3px;left:1225.30px;">netdata.disk_util.sdc.utilization.mean</div>
<div class="t" style="top:575.42px;font-size:12.5px;letter-spacing:0.3px;left:1482.80px;">netdata.disk_util.sdd.utilization.mean</div>
<div class="t" style="top:596.42px;font-size:12.5px;letter-spacing:0.3px;left:1225.30px;">netdata.disk_util.sde.utilization.mean</div>
<div class="t" style="top:596.42px;font-size:12.5px;letter-spacing:0.3px;left:1482.80px;">netdata.disk_util.sdf.utilization.mean</div>
<div class="t" style="top:679.49px;font-size:12.3px;letter-spacing:0.1px;left:-559.50px;width:600px;text-align:right;">100%</div>
<div class="t" style="top:716.49px;font-size:12.3px;letter-spacing:0.1px;left:-559.50px;width:600px;text-align:right;">75%</div>
<div class="t" style="top:752.49px;font-size:12.3px;letter-spacing:0.1px;left:-559.50px;width:600px;text-align:right;">50%</div>
<div class="t" style="top:789.49px;font-size:12.3px;letter-spacing:0.1px;left:-559.50px;width:600px;text-align:right;">25%</div>
<div class="t" style="top:826.49px;font-size:12.3px;letter-spacing:0.1px;left:-559.50px;width:600px;text-align:right;">0%</div>
<div class="t" style="top:841.09px;font-size:12.3px;letter-spacing:0.1px;left:-332.20px;width:800px;text-align:center;">18:00:00</div>
<div class="t" style="top:841.09px;font-size:12.3px;letter-spacing:0.1px;left:-237.20px;width:800px;text-align:center;">18:00:30</div>
<div class="t" style="top:841.09px;font-size:12.3px;letter-spacing:0.1px;left:-141.20px;width:800px;text-align:center;">18:01:00</div>
<div class="t" style="top:841.09px;font-size:12.3px;letter-spacing:0.1px;left:-45.20px;width:800px;text-align:center;">18:01:30</div>
<div class="t" style="top:841.09px;font-size:12.3px;letter-spacing:0.1px;left:49.80px;width:800px;text-align:center;">18:02:00</div>
<div class="t" style="top:841.09px;font-size:12.3px;letter-spacing:0.1px;left:145.80px;width:800px;text-align:center;">18:02:30</div>
<div class="t" style="top:866.42px;font-size:12.5px;letter-spacing:0.3px;left:47.20px;">User</div>
<div class="t" style="top:866.42px;font-size:12.5px;letter-spacing:0.3px;left:118.60px;">System</div>
<div class="t" style="top:866.42px;font-size:12.5px;letter-spacing:0.3px;left:205.50px;">Iowait</div>
<div class="t" style="top:866.42px;font-size:12.5px;letter-spacing:0.3px;left:284.20px;">soft_irq</div>
<div class="t" style="top:679.49px;font-size:12.3px;letter-spacing:0.1px;left:39.50px;width:600px;text-align:right;">150 GB</div>
<div class="t" style="top:728.49px;font-size:12.3px;letter-spacing:0.1px;left:39.50px;width:600px;text-align:right;">100 GB</div>
<div class="t" style="top:777.49px;font-size:12.3px;letter-spacing:0.1px;left:39.50px;width:600px;text-align:right;">50 GB</div>
<div class="t" style="top:826.49px;font-size:12.3px;letter-spacing:0.1px;left:39.50px;width:600px;text-align:right;">0 MB</div>
<div class="t" style="top:841.09px;font-size:12.3px;letter-spacing:0.1px;left:265.80px;width:800px;text-align:center;">18:00:00</div>
<div class="t" style="top:841.09px;font-size:12.3px;letter-spacing:0.1px;left:359.80px;width:800px;text-align:center;">18:00:30</div>
<div class="t" style="top:841.09px;font-size:12.3px;letter-spacing:0.1px;left:453.80px;width:800px;text-align:center;">18:01:00</div>
<div class="t" style="top:841.09px;font-size:12.3px;letter-spacing:0.1px;left:546.80px;width:800px;text-align:center;">18:01:30</div>
<div class="t" style="top:841.09px;font-size:12.3px;letter-spacing:0.1px;left:640.80px;width:800px;text-align:center;">18:02:00</div>
<div class="t" style="top:841.09px;font-size:12.3px;letter-spacing:0.1px;left:734.80px;width:800px;text-align:center;">18:02:30</div>
<div class="t" style="top:866.42px;font-size:12.5px;letter-spacing:0.3px;left:636.20px;">Used</div>
<div class="t" style="top:866.42px;font-size:12.5px;letter-spacing:0.3px;left:710.50px;">Cached</div>
<div class="t" style="top:866.42px;font-size:12.5px;letter-spacing:0.3px;left:798.90px;">Buffers</div>
<div class="t" style="top:866.42px;font-size:12.5px;letter-spacing:0.3px;left:884.40px;">Free</div>
<div class="t" style="top:866.42px;font-size:12.5px;letter-spacing:0.3px;left:954.30px;">SWAP</div>
<div class="t" style="top:679.49px;font-size:12.3px;letter-spacing:0.1px;left:627.50px;width:600px;text-align:right;">6 MB/s</div>
<div class="t" style="top:712.49px;font-size:12.3px;letter-spacing:0.1px;left:627.50px;width:600px;text-align:right;">4 MB/s</div>
<div class="t" style="top:746.49px;font-size:12.3px;letter-spacing:0.1px;left:627.50px;width:600px;text-align:right;">2 MB/s</div>
<div class="t" style="top:780.49px;font-size:12.3px;letter-spacing:0.1px;left:627.50px;width:600px;text-align:right;">0 kB/s</div>
<div class="t" style="top:794.59px;font-size:12.3px;letter-spacing:0.1px;left:853.80px;width:800px;text-align:center;">18:00:00</div>
<div class="t" style="top:794.59px;font-size:12.3px;letter-spacing:0.1px;left:947.80px;width:800px;text-align:center;">18:00:30</div>
<div class="t" style="top:794.59px;font-size:12.3px;letter-spacing:0.1px;left:1041.80px;width:800px;text-align:center;">18:01:00</div>
<div class="t" style="top:794.59px;font-size:12.3px;letter-spacing:0.1px;left:1135.80px;width:800px;text-align:center;">18:01:30</div>
<div class="t" style="top:794.59px;font-size:12.3px;letter-spacing:0.1px;left:1229.80px;width:800px;text-align:center;">18:02:00</div>
<div class="t" style="top:794.59px;font-size:12.3px;letter-spacing:0.1px;left:1323.80px;width:800px;text-align:center;">18:02:30</div>
<div class="t" style="top:820.42px;font-size:12.5px;letter-spacing:0.3px;left:1225.20px;">netdata.disk.sda.writes.mean</div>
<div class="t" style="top:820.42px;font-size:12.5px;letter-spacing:0.3px;left:1439.30px;">netdata.disk.sdb.writes.mean</div>
<div class="t" style="top:841.42px;font-size:12.5px;letter-spacing:0.3px;left:1225.20px;">netdata.disk.sdc.writes.mean</div>
<div class="t" style="top:841.42px;font-size:12.5px;letter-spacing:0.3px;left:1439.30px;">netdata.disk.sdd.writes.mean</div>
<div class="t" style="top:862.42px;font-size:12.5px;letter-spacing:0.3px;left:1225.20px;">netdata.disk.sde.writes.mean</div>
<div class="t" style="top:862.42px;font-size:12.5px;letter-spacing:0.3px;left:1439.30px;">netdata.disk.sdf.writes.mean</div>
<div class="t" style="left:-23.4px;top:470.5px;width:80px;height:14px;line-height:14px;text-align:center;font-size:12.5px;letter-spacing:0.3px;transform:rotate(-90deg)">ops/s</div>
<div class="t" style="left:565.6px;top:470.5px;width:80px;height:14px;line-height:14px;text-align:center;font-size:12.5px;letter-spacing:0.3px;transform:rotate(-90deg)">ops/s</div>
</body></html>
